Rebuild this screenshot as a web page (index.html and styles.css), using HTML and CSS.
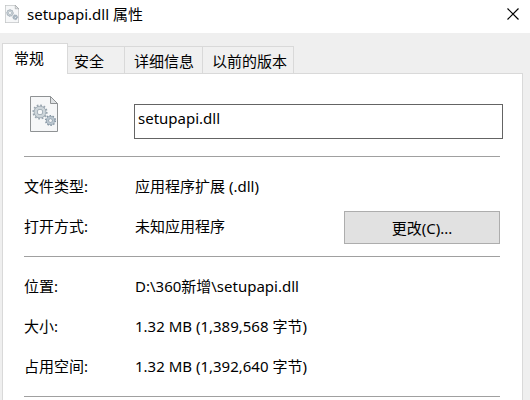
FILE: index.html
```html
<!DOCTYPE html>
<html lang="zh-CN">
<head>
    <meta charset="UTF-8">
    <meta name="viewport" content="width=device-width, initial-scale=1.0">
    <title>setupapi.dll 属性</title>
    <link rel="stylesheet" href="styles.css">
</head>
<body>
    <svg class="symbols" aria-hidden="true">
        <symbol id="dll-file" viewBox="0 0 28 36">
            <path d="M.5 .5H20.500L27.500 7.500V35.500H.5z" fill="#f6f7f8" stroke="#8f9294"/>
            <path d="M20.500 .5V7.500H27.500z" fill="#dfe2e4" stroke="#8f9294"/>
            <circle cx="10" cy="16" r="6.600" fill="none" stroke="#98a4ae" stroke-width="2" stroke-dasharray="1.700 1.756"/>
            <circle cx="10" cy="16" r="4.300" fill="none" stroke="#9aa6af" stroke-width="4"/>
            <circle cx="10" cy="16" r="4.300" fill="none" stroke="#cdd5da" stroke-width="2.600"/>
            <circle cx="20.500" cy="24.500" r="4.800" fill="none" stroke="#8696a4" stroke-width="1.600" stroke-dasharray="1.500 1.516"/>
            <circle cx="20.500" cy="24.500" r="3" fill="none" stroke="#8696a4" stroke-width="3"/>
            <circle cx="20.500" cy="24.500" r="3" fill="none" stroke="#bac6cf" stroke-width="1.800"/>
        </symbol>
    </svg>

    <header class="titlebar">
        <svg class="title-icon" aria-hidden="true"><use href="#dll-file"/></svg>
        <h1>setupapi.dll 属性</h1>
        <button type="button" class="close" aria-label="关闭">
            <svg viewBox="0 0 12 12" width="12" height="12"><path d="M.5 .5l11 11M11.500 .5l-11 11" stroke="#000" stroke-width="1.200"/></svg>
        </button>
    </header>

    <div class="tabs" role="tablist">
        <button type="button" class="tab active" role="tab" aria-selected="true">常规</button>
        <button type="button" class="tab" role="tab" aria-selected="false">安全</button>
        <button type="button" class="tab" role="tab" aria-selected="false">详细信息</button>
        <button type="button" class="tab" role="tab" aria-selected="false">以前的版本</button>
    </div>

    <main class="panel">
        <div class="name-row">
            <div class="icon-cell"><svg class="file-icon" aria-hidden="true"><use href="#dll-file"/></svg></div>
            <input type="text" class="file-name" aria-label="文件名" value="setupapi.dll">
        </div>
        <dl class="group">
            <div class="row">
                <dt>文件类型:</dt>
                <dd>应用程序扩展 (.dll)</dd>
            </div>
            <div class="row">
                <dt>打开方式:</dt>
                <dd>未知应用程序</dd>
                <dd><button type="button" class="change">更改(C)...</button></dd>
            </div>
        </dl>
        <dl class="group">
            <div class="row">
                <dt>位置:</dt>
                <dd>D:\360新增\setupapi.dll</dd>
            </div>
            <div class="row">
                <dt>大小:</dt>
                <dd>1.32 MB (1,389,568 字节)</dd>
            </div>
            <div class="row">
                <dt>占用空间:</dt>
                <dd>1.32 MB (1,392,640 字节)</dd>
            </div>
        </dl>
        <hr>
    </main>
</body>
</html>
```
FILE: styles.css
```css
* {
    box-sizing: border-box;
}

body {
    margin: 0;
    height: 100vh;
    overflow: hidden;
    display: flex;
    flex-direction: column;
    background-color: #efefef;
    color: #000;
    font-family: "Noto Sans", "Noto Sans CJK SC", sans-serif;
    font-size: 15px;
    line-height: 20px;
}

button,
input {
    font: inherit;
    color: inherit;
    border-radius: 0;
}

.symbols {
    display: none;
}

.titlebar {
    display: flex;
    align-items: center;
    flex-shrink: 0;
    height: 33px;
    padding: 0 11px 5px 5px;
    background-color: #fff;
}

.title-icon {
    width: 14px;
    height: 18px;
}

h1 {
    flex: 1;
    margin: 0 0 0 8px;
    font-size: 15px;
    font-weight: 400;
}

.close {
    display: flex;
    padding: 0;
    border: none;
    background: none;
}

.tabs {
    display: flex;
    align-items: flex-end;
    flex-shrink: 0;
    margin-left: 2px;
    padding-top: 10px;
}

.tab {
    height: 27px;
    padding: 1px 8px 0 9px;
    border: 1px solid #d9d9d9;
    border-width: 1px 1px 0 0;
    background-color: #f0f0f0;
    white-space: nowrap;
}

.tab:nth-child(2) {
    padding: 1px 20px 0 6px;
}

.tab:last-child {
    padding: 1px 6px 0 9px;
}

.tab.active {
    position: relative;
    height: 31px;
    margin-bottom: -1px;
    padding: 0 23px 2px 11px;
    border-left-width: 1px;
    background-color: #fff;
}

.panel {
    flex: 1 0 auto;
    margin: 0 7px 0 2px;
    padding: 22px 22px 0 21px;
    border: 1px solid #d9d9d9;
    border-bottom: none;
    background-color: #fff;
}

.name-row {
    display: flex;
    align-items: flex-start;
    margin-right: -3px;
    padding-bottom: 17px;
}

.icon-cell {
    width: 110px;
    padding-left: 6px;
}

.file-icon {
    display: block;
    width: 28px;
    height: 36px;
}

.file-name {
    flex: 1;
    min-width: 0;
    height: 35px;
    margin-top: 8px;
    padding: 0 3px 8px;
    border: 1px solid #646464;
    background-color: #fff;
}

.group {
    margin: 0;
    padding: 9px 0 10px;
    border-top: 1px solid #a0a0a0;
}

.row {
    display: grid;
    grid-template-columns: 111px 1fr auto;
    align-items: center;
    height: 40px;
}

dd {
    margin: 0;
}

.change {
    display: block;
    width: 156px;
    height: 33px;
    margin-top: 3px;
    padding: 0;
    border: 1px solid #adadad;
    background-color: #e1e1e1;
}

hr {
    margin: 0;
    border: none;
    border-top: 1px solid #a0a0a0;
}
```
